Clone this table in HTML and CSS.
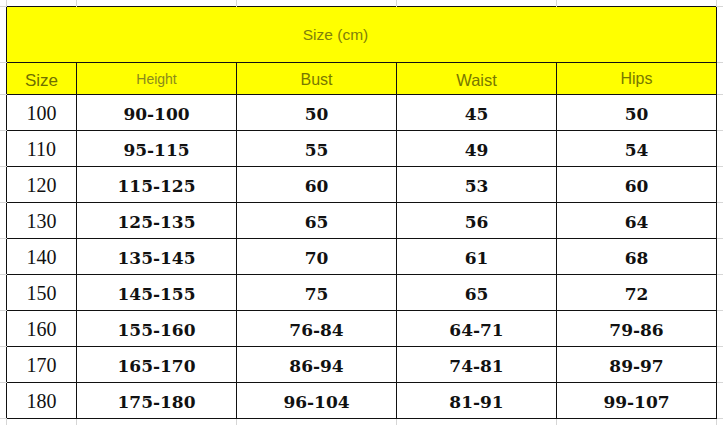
FILE: index.html
```html
<!DOCTYPE html>
<html>
<head>
<meta charset="utf-8">
<link rel="stylesheet" href="styles.css">
</head>
<body>
<table class="sheet">
  <colgroup>
    <col class="c-gl"><col class="c-size"><col class="c-col"><col class="c-col"><col class="c-col"><col class="c-col"><col class="c-gr">
  </colgroup>
  <tr class="r-top">
    <td class="g g-tl"></td><td class="g g-t"></td><td class="g g-t"></td><td class="g g-t"></td><td class="g g-t"></td><td class="g g-t"></td><td class="g g-tr"></td>
  </tr>
  <tr class="r-title">
    <td class="g g-l"></td>
    <td class="cell title" colspan="5">Size (cm)</td>
    <td class="g g-r"></td>
  </tr>
  <tr class="r-head">
    <td class="g g-l"></td>
    <td class="cell head h-size">Size</td>
    <td class="cell head h-height">Height</td>
    <td class="cell head h-bust">Bust</td>
    <td class="cell head h-waist">Waist</td>
    <td class="cell head h-hips">Hips</td>
    <td class="g g-r"></td>
  </tr>
  <tr class="r-data"><td class="g g-l"></td><td class="cell sz">100</td><td class="cell v">90-100</td><td class="cell v">50</td><td class="cell v">45</td><td class="cell v">50</td><td class="g g-r"></td></tr>
  <tr class="r-data"><td class="g g-l"></td><td class="cell sz">110</td><td class="cell v">95-115</td><td class="cell v">55</td><td class="cell v">49</td><td class="cell v">54</td><td class="g g-r"></td></tr>
  <tr class="r-data"><td class="g g-l"></td><td class="cell sz">120</td><td class="cell v">115-125</td><td class="cell v">60</td><td class="cell v">53</td><td class="cell v">60</td><td class="g g-r"></td></tr>
  <tr class="r-data"><td class="g g-l"></td><td class="cell sz">130</td><td class="cell v">125-135</td><td class="cell v">65</td><td class="cell v">56</td><td class="cell v">64</td><td class="g g-r"></td></tr>
  <tr class="r-data"><td class="g g-l"></td><td class="cell sz">140</td><td class="cell v">135-145</td><td class="cell v">70</td><td class="cell v">61</td><td class="cell v">68</td><td class="g g-r"></td></tr>
  <tr class="r-data"><td class="g g-l"></td><td class="cell sz">150</td><td class="cell v">145-155</td><td class="cell v">75</td><td class="cell v">65</td><td class="cell v">72</td><td class="g g-r"></td></tr>
  <tr class="r-data"><td class="g g-l"></td><td class="cell sz">160</td><td class="cell v">155-160</td><td class="cell v">76-84</td><td class="cell v">64-71</td><td class="cell v">79-86</td><td class="g g-r"></td></tr>
  <tr class="r-data"><td class="g g-l"></td><td class="cell sz">170</td><td class="cell v">165-170</td><td class="cell v">86-94</td><td class="cell v">74-81</td><td class="cell v">89-97</td><td class="g g-r"></td></tr>
  <tr class="r-data"><td class="g g-l"></td><td class="cell sz">180</td><td class="cell v">175-180</td><td class="cell v">96-104</td><td class="cell v">81-91</td><td class="cell v">99-107</td><td class="g g-r"></td></tr>
  <tr class="r-bottom">
    <td class="g g-bl"></td><td class="g g-b"></td><td class="g g-b"></td><td class="g g-b"></td><td class="g g-b"></td><td class="g g-b"></td><td class="g g-br"></td>
  </tr>
</table>
</body>
</html>
```

FILE: styles.css
```css
html, body {
  margin: 0;
  padding: 0;
  background: #ffffff;
  overflow: hidden;
}

.sheet {
  border-collapse: collapse;
  table-layout: fixed;
  width: 723px;
  margin-top: -1px;
  margin-left: -1px;
}

.c-gl { width: 7px; }
.c-size { width: 70px; }
.c-col { width: 160px; }
.c-gr { width: 7px; }

td {
  padding: 0;
  text-align: center;
  vertical-align: middle;
}

.g { border: 1px solid #d6d6d6; }
.g-tl { border-right: none; border-bottom: none; }
.g-t { border-bottom: none; }
.g-tr { border-left: none; border-bottom: none; }
.g-l { border-left: none; border-right: none; }
.g-r { border-left: none; border-right: none; }
.g-bl { border-right: none; border-top: none; }
.g-b { border-top: none; }
.g-br { border-left: none; border-top: none; }

.cell { border: 1px solid #111111; }

.r-top td { height: 6px; }
.r-title td { height: 55px; }
.r-head td { height: 31px; }
.r-data td { height: 35px; }
.r-data .cell { height: 33px; padding-top: 2px; }
.r-bottom td { height: 10px; }

.title, .head {
  background: #ffff00;
  font-family: "Liberation Sans", Arial, sans-serif;
  line-height: 1;
}

.r-title .title {
  height: 54px;
  font-size: 15.5px;
  color: #7f7f0a;
  padding: 1px 52px 0 0;
}

.head { color: #787800; }
.r-head .h-size { font-size: 17px; height: 27px; padding-top: 4px; color: #6f6f00; }
.r-head .h-height { font-size: 14px; height: 31px; color: #8a8a1c; padding-bottom: 0; }
.r-head .h-bust { font-size: 16px; height: 28px; padding-top: 3px; }
.r-head .h-waist { font-size: 16.5px; height: 28px; padding-top: 3px; }
.r-head .h-hips { font-size: 16px; height: 30px; padding-top: 1px; }

.sz {
  font-family: "Liberation Serif", "Times New Roman", serif;
  font-size: 20px;
  color: #111111;
}

.v {
  font-family: "DejaVu Serif", serif;
  font-weight: bold;
  font-size: 17px;
  color: #111111;
}
```
